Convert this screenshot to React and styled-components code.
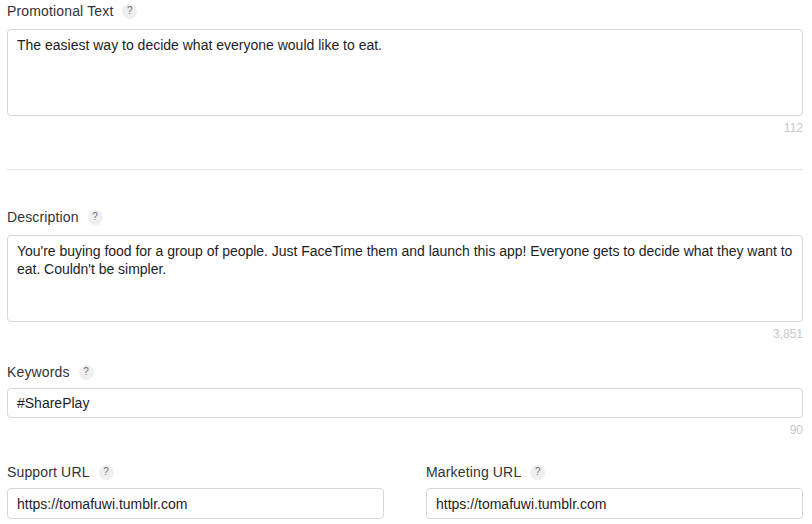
import React from "react";
import styled, { createGlobalStyle } from "styled-components";

const GlobalStyle = createGlobalStyle`
    html, body {
        margin: 0;
        padding: 0;
        background: #ffffff;
    }

    body {
        font-family: "Liberation Sans", Arial, sans-serif;
        color: #1d1d1f;
    }
`;

const Page = styled.div`
    width: 796px;
    padding: 2px 9px 0 7px;
`;

const Field = styled.div`
    display: flex;
    flex-direction: column;
    margin-top: ${(props) => props.top || 0}px;
`;

const LabelRow = styled.div`
    display: flex;
    align-items: center;
    gap: 9px;
    height: 18px;
    margin-bottom: ${(props) => props.gap || 9}px;
    font-size: 14px;
    letter-spacing: 0.15px;
    color: #333336;
`;

const Help = styled.span`
    display: inline-flex;
    align-items: center;
    justify-content: center;
    width: 15px;
    height: 15px;
    border-radius: 50%;
    background: #efefef;
    color: #6e6e73;
    font-size: 10px;
    line-height: 1;
`;

const Box = styled.div`
    box-sizing: border-box;
    height: ${(props) => props.height}px;
    padding: ${(props) => (props.multi ? "6px 9px" : "0 9px")};
    display: flex;
    align-items: ${(props) => (props.multi ? "flex-start" : "center")};
    border: 1px solid #d6d6d6;
    border-radius: 4px;
    font-size: 14px;
    line-height: 18px;
    color: #1d1d1f;
    background: #ffffff;
`;

const Lines = styled.div`
    white-space: nowrap;
    letter-spacing: -0.025px;
`;

const Counter = styled.div`
    margin-top: 5px;
    text-align: right;
    font-size: 12px;
    line-height: 14px;
    color: #c7c7cc;
`;

const Divider = styled.hr`
    margin: 34px 0 0;
    border: none;
    border-top: 1px solid #e3e3e3;
`;

const Columns = styled.div`
    display: grid;
    grid-template-columns: 377px 377px;
    column-gap: 42px;
    margin-top: 26px;
`;

const Label = ({ children, gap }) => (
    <LabelRow gap={gap}>
        {children}
        <Help>?</Help>
    </LabelRow>
);

const App = () => {
    return (
        <React.Fragment>
            <GlobalStyle />
            <Page>
                <Field>
                    <Label>Promotional Text</Label>
                    <Box multi height={87}>
                        The easiest way to decide what everyone would like to eat.
                    </Box>
                    <Counter>112</Counter>
                </Field>

                <Divider />

                <Field top={38}>
                    <Label>Description</Label>
                    <Box multi height={87}>
                        <Lines>
                            You're buying food for a group of people. Just
                            FaceTime them and launch this app! Everyone gets to
                            decide what they want to
                            <br />
                            eat. Couldn't be simpler.
                        </Lines>
                    </Box>
                    <Counter>3,851</Counter>
                </Field>

                <Field top={22}>
                    <Label gap={7}>Keywords</Label>
                    <Box height={30}>#SharePlay</Box>
                    <Counter>90</Counter>
                </Field>

                <Columns>
                    <Field>
                        <Label gap={7}>Support URL</Label>
                        <Box height={31}>https://tomafuwi.tumblr.com</Box>
                    </Field>
                    <Field>
                        <Label gap={7}>Marketing URL</Label>
                        <Box height={31}>https://tomafuwi.tumblr.com</Box>
                    </Field>
                </Columns>
            </Page>
        </React.Fragment>
    );
};

export default App;
